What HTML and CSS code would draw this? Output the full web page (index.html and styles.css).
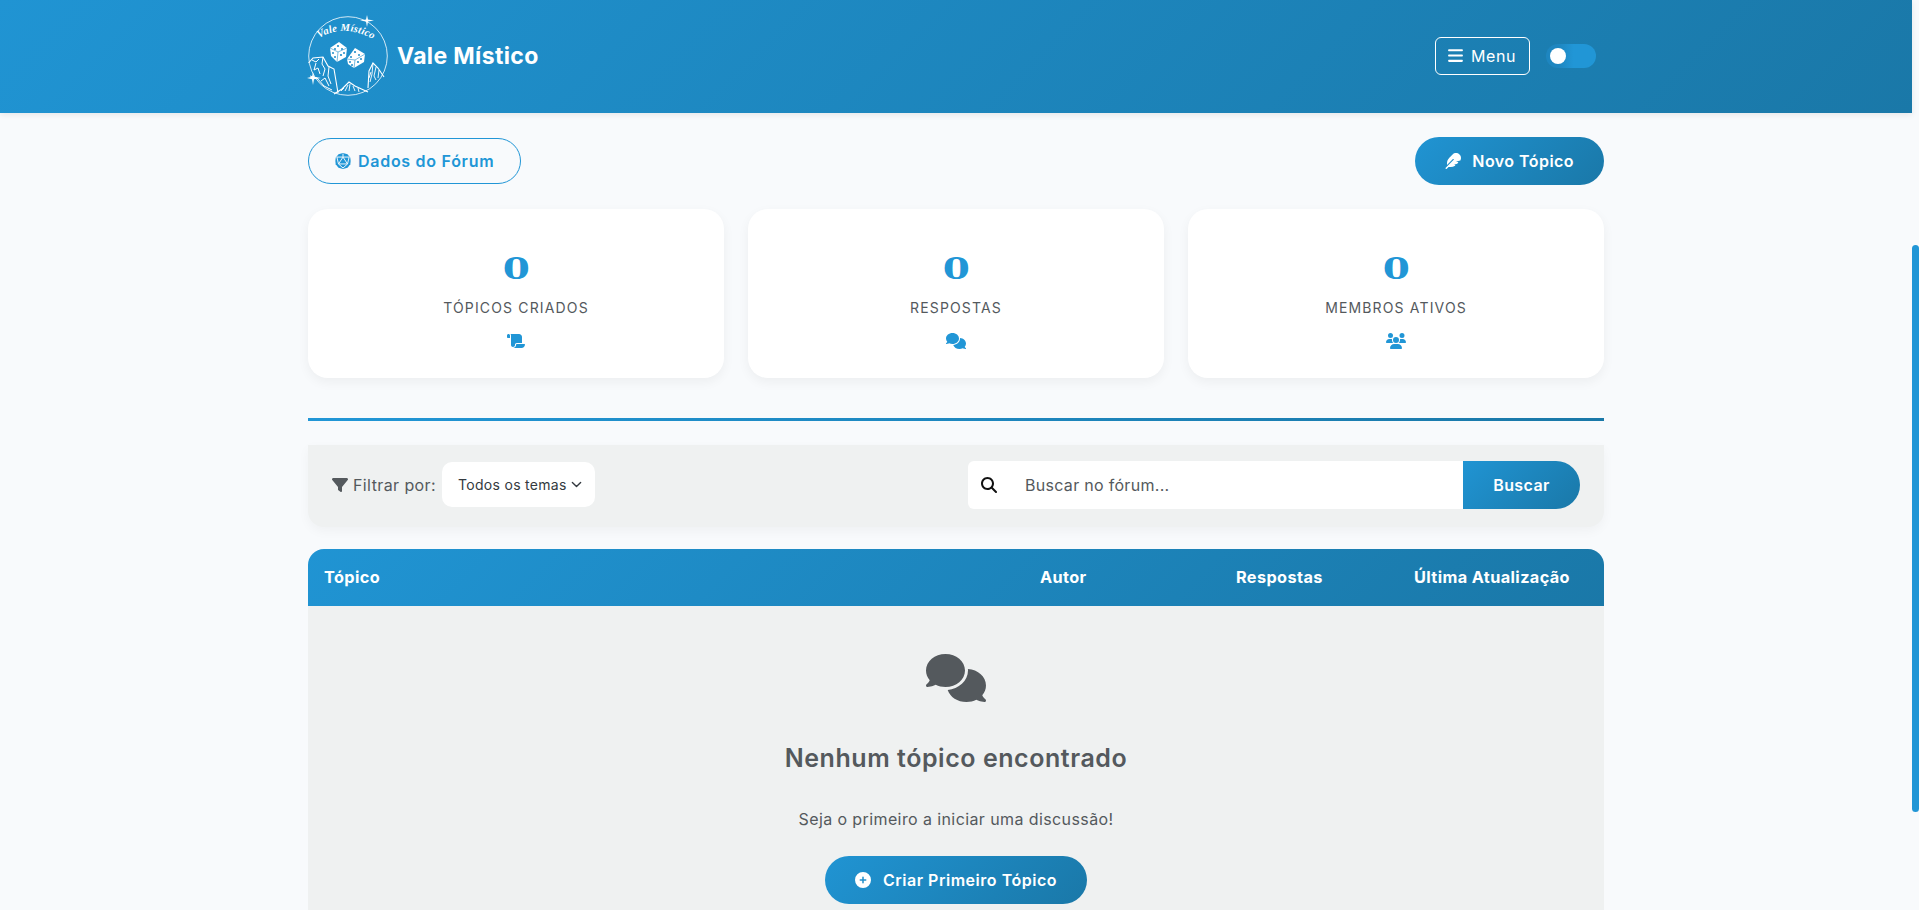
FILE: index.html
```html
<!DOCTYPE html>
<html lang="pt-BR">
<head>
<meta charset="utf-8">
<title>Vale Místico</title>
<link rel="stylesheet" href="styles.css">
</head>
<body>
<div class="page">
  <div class="viewport">
    <header class="topbar">
      <div class="container topbar-inner">
        <a class="brand">
          <svg class="logo" viewBox="0 0 80 80" fill="none" stroke="#fff" stroke-width="1">
            <circle cx="40" cy="40" r="39.3" stroke-width=".8"/>
            <path id="logoarc" d="M11 22 Q38 6 70 26" stroke="none"/>
            <text class="logo-text" fill="#fff" stroke="none"><textPath href="#logoarc">Vale Místico</textPath></text>
            <path d="M59 -1 L60 3.4 L66 4.5 L60 5.6 L59 11 L58 5.6 L52 4.5 L58 3.4Z" fill="#fff" stroke="none"/>
            <path d="M5 56 L6 60.8 L13 62 L6 63.2 L5 69 L4 63.2 L-1 62 L4 60.8Z" fill="#fff" stroke="none"/>
            <g fill="#fff" stroke="none">
              <path d="M22 32 L31 26 L39 32 L38 41 L29 46 L23 40Z"/>
              <path d="M39 43 L47 32 L57 38 L56 46 L46 52 L40 48Z"/>
            </g>
            <g stroke="#1f8dc9" stroke-width=".6">
              <path d="M22 32 L30 36 L39 32 M30 36 L29 46"/>
              <path d="M39 43 L47 44 L57 38 M47 44 L46 52"/>
            </g>
            <g fill="#1f8dc9" stroke="none">
              <circle cx="30" cy="30" r="1.1"/><circle cx="34" cy="33" r="1"/><circle cx="27" cy="33" r="1"/><circle cx="25" cy="37" r="1"/><circle cx="27" cy="41" r="1"/><circle cx="33" cy="39" r="1.1"/><circle cx="36" cy="37" r="1"/>
              <circle cx="47" cy="36" r="1.1"/><circle cx="51" cy="39" r="1"/><circle cx="43" cy="41" r="1"/><circle cx="42" cy="46" r="1"/><circle cx="44" cy="49" r="1"/><circle cx="50" cy="46" r="1.1"/><circle cx="53" cy="43" r="1"/>
            </g>
            <path stroke-width="1.1" d="M0.5 47 L5 42 L15 41 L20 50 L26 53 L30 77"/>
            <path stroke-width="1" d="M4 44 L8 46 L11 43 M15 41 L14 48 L17 53 L15 60 M8 47 L6 54 L10 52 L12 58 M21 51 L20 60 L23 68 M2 60 L9 62 L16 70 L24 74 M13 65 L17 62 L21 70"/>
            <path stroke-width="1.2" d="M26 78 L34 73 L41 66 L47 70 L60 76"/>
            <path stroke-width=".9" d="M37 75 L40 69 M42 68 L41 75 M45 70 L47 75 M50 72 L51 76 M33 75 L36 72"/>
            <path stroke-width="1.1" d="M60 72 L61 55 L65 47 L70 52 L76 61"/>
            <path stroke-width=".9" d="M65 47 L64 58 L62 66 M68 51 L66 60 L68 64 M71 54 L70 62 M63 56 L61 62"/>
          </svg>
          <span class="brand-name">Vale Místico</span>
        </a>
        <div class="topbar-actions">
          <button class="menu-btn">
            <svg class="ico-bars" viewBox="0 0 448 512"><path d="M0 96C0 78.3 14.3 64 32 64H416c17.7 0 32 14.3 32 32s-14.3 32-32 32H32C14.3 128 0 113.7 0 96zM0 256c0-17.7 14.3-32 32-32H416c17.7 0 32 14.3 32 32s-14.3 32-32 32H32c-17.7 0-32-14.3-32-32zM448 416c0 17.7-14.3 32-32 32H32c-17.7 0-32-14.3-32-32s14.3-32 32-32H416c17.7 0 32 14.3 32 32z"/></svg>
            <span>Menu</span>
          </button>
          <div class="toggle"><span class="toggle-knob"></span></div>
        </div>
      </div>
    </header>

    <main class="container content">
      <div class="actions">
        <button class="btn-outline">
          <svg class="ico-16" viewBox="0 0 512 512">
            <path d="M256 0 L400 40 L490 150 Q512 256 490 362 L400 472 L256 512 L112 472 L22 362 Q0 256 22 150 L112 40Z" fill="#2196d6"/>
            <path d="M256 130 L400 350 H112Z M256 130 L256 20 M256 130 L60 130 M256 130 L452 130 M112 350 L60 130 M400 350 L452 130 M112 350 L256 480 L400 350" fill="none" stroke="#f8fafc" stroke-width="30"/>
          </svg>
          <span>Dados do Fórum</span>
        </button>
        <button class="btn-primary btn-new">
          <svg class="ico-16" viewBox="0 0 512 512"><path d="M278.5 215.6L23 471c-9.4 9.4-9.4 24.6 0 33.9s24.6 9.4 33.9 0l57-57h68c49.7 0 97.9-14.4 139-41c11.1-7.2 5.5-23-7.8-23c-5.1 0-9.2-4.1-9.2-9.2c0-4.1 2.7-7.6 6.5-8.8l81-24.3c2.5-.8 4.8-2.1 6.7-4l22.4-22.4c10.1-10.1 2.9-27.3-11.3-27.3l-32.2 0c-5.1 0-9.2-4.1-9.2-9.2c0-4.1 2.7-7.6 6.5-8.8l112-33.6c4-1.2 7.4-3.9 9.3-7.7C506.4 207.6 512 184.1 512 160c0-41-16.3-80.3-45.3-109.3l-5.5-5.5C432.3 16.3 393 0 352 0s-80.3 16.3-109.3 45.3L139 149C91 197 64 262.1 64 330v55.3L253.6 195.8c6.2-6.2 16.4-6.2 22.6 0c5.4 5.4 6.1 13.6 2.2 19.8z"/></svg>
          <span>Novo Tópico</span>
        </button>
      </div>

      <section class="stats">
        <article class="stat">
          <div class="stat-num">0</div>
          <div class="stat-label">Tópicos Criados</div>
          <svg class="stat-ico" viewBox="0 0 576 512"><path d="M0 80v48c0 17.7 14.3 32 32 32H48 96V80c0-26.5-21.5-48-48-48S0 53.5 0 80zM112 32c10 13.4 16 30 16 48V384c0 35.3 28.7 64 64 64s64-28.7 64-64v-5.3c0-32.4 26.3-58.7 58.7-58.7H480V128c0-53-43-96-96-96H112zM464 480c61.9 0 112-50.1 112-112c0-8.8-7.2-16-16-16H314.7c-14.7 0-26.7 11.9-26.7 26.7V384c0 53-43 96-96 96H368h96z"/></svg>
        </article>
        <article class="stat">
          <div class="stat-num">0</div>
          <div class="stat-label">Respostas</div>
          <svg class="stat-ico" viewBox="0 0 640 512"><path d="M208 352c114.9 0 208-78.8 208-176S322.9 0 208 0S0 78.8 0 176c0 38.6 14.7 74.3 39.6 103.4c-3.5 9.4-8.7 17.7-14.2 24.7c-4.8 6.2-9.7 11-13.3 14.3c-1.8 1.6-3.3 2.9-4.3 3.7c-.5 .4-.9 .7-1.1 .8l-.2 .2 0 0 0 0C1 327.2-1.4 334.4 .8 340.9S9.1 352 16 352c21.8 0 43.8-5.6 62.1-12.5c9.2-3.5 17.8-7.4 25.3-11.4C134.1 343.3 169.8 352 208 352zM448 176c0 112.3-99.1 196.9-216.5 207C255.8 457.4 336.4 512 432 512c38.2 0 73.9-8.7 104.7-23.9c7.5 4 16 7.9 25.2 11.4c18.3 6.9 40.3 12.5 62.1 12.5c6.9 0 13.1-4.5 15.2-11.1c2.1-6.6-.2-13.8-5.8-17.9l0 0 0 0-.2-.2c-.2-.2-.6-.4-1.1-.8c-1-.8-2.5-2-4.3-3.7c-3.6-3.3-8.5-8.1-13.3-14.3c-5.5-7-10.7-15.4-14.2-24.7c24.9-29 39.6-64.7 39.6-103.4c0-92.8-84.9-168.9-192.6-175.5c.4 5.1 .6 10.3 .6 15.5z"/></svg>
        </article>
        <article class="stat">
          <div class="stat-num">0</div>
          <div class="stat-label">Membros Ativos</div>
          <svg class="stat-ico" viewBox="0 0 640 512"><path d="M144 0a80 80 0 1 1 0 160A80 80 0 1 1 144 0zM512 0a80 80 0 1 1 0 160A80 80 0 1 1 512 0zM0 298.7C0 239.8 47.8 192 106.7 192h42.7c15.9 0 31 3.5 44.6 9.7c-1.3 7.2-1.9 14.7-1.9 22.3c0 38.2 16.8 72.5 43.3 96c-.2 0-.4 0-.7 0H21.3C9.6 320 0 310.4 0 298.7zM405.3 320c-.2 0-.4 0-.7 0c26.6-23.5 43.3-57.8 43.3-96c0-7.6-.7-15-1.9-22.3c13.6-6.3 28.7-9.7 44.6-9.7h42.7C592.2 192 640 239.8 640 298.7c0 11.8-9.6 21.3-21.3 21.3H405.3zM224 224a96 96 0 1 1 192 0 96 96 0 1 1 -192 0zM128 485.3C128 411.7 187.7 352 261.3 352H378.7C452.3 352 512 411.7 512 485.3c0 14.7-11.9 26.7-26.7 26.7H154.7c-14.7 0-26.7-11.9-26.7-26.7z"/></svg>
        </article>
      </section>

      <hr class="divider">

      <section class="filters">
        <div class="filter-left">
          <svg class="ico-filter" viewBox="0 0 512 512"><path d="M3.9 54.9C10.5 40.9 24.5 32 40 32H472c15.5 0 29.5 8.9 36.1 22.9s4.6 30.5-5.2 42.5L320 320.9V448c0 12.1-6.8 23.2-17.7 28.6s-23.8 4.3-33.5-3l-64-48c-8.1-6-12.8-15.5-12.8-25.6V320.9L9 97.3C-.7 85.4-2.8 68.8 3.9 54.9z"/></svg>
          <span class="filter-label">Filtrar por:</span>
          <div class="select">
            <span>Todos os temas</span>
            <svg class="chev" viewBox="0 0 16 16"><path d="M2 5l6 6 6-6" fill="none" stroke="#343a40" stroke-width="2" stroke-linecap="round" stroke-linejoin="round"/></svg>
          </div>
        </div>
        <form class="search">
          <span class="search-ico"><svg class="ico-16" viewBox="0 0 512 512"><path d="M416 208c0 45.9-14.9 88.3-40 122.7L502.6 457.4c12.5 12.5 12.5 32.8 0 45.3s-32.8 12.5-45.3 0L330.7 376c-34.4 25.2-76.8 40-122.7 40C93.1 416 0 322.9 0 208S93.1 0 208 0S416 93.1 416 208zM208 352a144 144 0 1 0 0-288 144 144 0 1 0 0 288z"/></svg></span>
          <input class="search-input" type="text" placeholder="Buscar no fórum...">
          <button class="search-btn" type="button">Buscar</button>
        </form>
      </section>

      <section class="topics">
        <div class="topics-head">
          <div class="th">Tópico</div>
          <div class="th">Autor</div>
          <div class="th">Respostas</div>
          <div class="th">Última Atualização</div>
        </div>
        <div class="empty">
          <svg class="empty-ico" viewBox="0 0 640 512"><path d="M208 352c114.9 0 208-78.8 208-176S322.9 0 208 0S0 78.8 0 176c0 38.6 14.7 74.3 39.6 103.4c-3.5 9.4-8.7 17.7-14.2 24.7c-4.8 6.2-9.7 11-13.3 14.3c-1.8 1.6-3.3 2.9-4.3 3.7c-.5 .4-.9 .7-1.1 .8l-.2 .2 0 0 0 0C1 327.2-1.4 334.4 .8 340.9S9.1 352 16 352c21.8 0 43.8-5.6 62.1-12.5c9.2-3.5 17.8-7.4 25.3-11.4C134.1 343.3 169.8 352 208 352zM448 176c0 112.3-99.1 196.9-216.5 207C255.8 457.4 336.4 512 432 512c38.2 0 73.9-8.7 104.7-23.9c7.5 4 16 7.9 25.2 11.4c18.3 6.9 40.3 12.5 62.1 12.5c6.9 0 13.1-4.5 15.2-11.1c2.1-6.6-.2-13.8-5.8-17.9l0 0 0 0-.2-.2c-.2-.2-.6-.4-1.1-.8c-1-.8-2.5-2-4.3-3.7c-3.6-3.3-8.5-8.1-13.3-14.3c-5.5-7-10.7-15.4-14.2-24.7c24.9-29 39.6-64.7 39.6-103.4c0-92.8-84.9-168.9-192.6-175.5c.4 5.1 .6 10.3 .6 15.5z"/></svg>
          <h2 class="empty-title">Nenhum tópico encontrado</h2>
          <p class="empty-text">Seja o primeiro a iniciar uma discussão!</p>
          <button class="btn-primary btn-first">
            <svg class="ico-16" viewBox="0 0 512 512"><path d="M256 512A256 256 0 1 0 256 0a256 256 0 1 0 0 512zM232 344V280H168c-13.3 0-24-10.7-24-24s10.7-24 24-24h64V168c0-13.3 10.7-24 24-24s24 10.7 24 24v64h64c13.3 0 24 10.7 24 24s-10.7 24-24 24H280v64c0 13.3-10.7 24-24 24s-24-10.7-24-24z"/></svg>
            <span>Criar Primeiro Tópico</span>
          </button>
        </div>
      </section>
    </main>
  </div>
  <div class="scrollbar"><div class="scroll-thumb"></div></div>
</div>
</body>
</html>
```

FILE: styles.css
```css
* { box-sizing: border-box; }
html, body { margin: 0; height: 100%; overflow: hidden; }
body {
  font-family: Inter, "Open Sans", "Liberation Sans", sans-serif;
  font-size: 16px;
  color: #54595d;
  background: #f8fafc;
}
button { font-family: inherit; cursor: pointer; }

.page { display: flex; height: 910px; overflow: hidden; }
.viewport { width: 1912px; flex: none; }
.scrollbar { width: 7px; flex: none; padding-top: 245px; }
.scroll-thumb { height: 567px; background: #2196d6; border-radius: 4px; }

.container { width: 1320px; margin: 0 auto; padding: 0 12px; }

.topbar {
  height: 113px;
  background: linear-gradient(135deg, #2094d3, #1a78a8);
  box-shadow: 0 2px 6px rgba(0, 0, 0, .08);
}
.topbar-inner { display: flex; align-items: center; justify-content: space-between; height: 111px; padding-right: 20px; }
.brand { display: flex; align-items: center; gap: 9px; color: #fff; }
.logo { width: 80px; height: 80px; display: block; overflow: visible; }
.logo-text { font: italic 700 10.5px "Liberation Serif", serif; letter-spacing: .3px; }
.brand-name { font-size: 23px; font-weight: 700; letter-spacing: .35px; }
.topbar-actions { display: flex; align-items: center; gap: 16px; }

.menu-btn {
  display: flex; align-items: center; gap: 8px;
  width: 95px; height: 38px;
  padding: 0 12px;
  background: transparent; color: #fff;
  border: 1px solid #fff; border-radius: 6px;
  font-size: 16px; font-weight: 400; letter-spacing: .6px;
}
.ico-bars { width: 15px; height: 17px; fill: #fff; flex: none; }

.toggle {
  width: 50px; height: 24px;
  padding: 4px;
  border-radius: 12px;
  background: linear-gradient(90deg, #1e86c0 0, #1e86c0 25%, #2196d6 55%);
}
.toggle-knob { display: block; width: 16px; height: 16px; border-radius: 50%; background: #fff; }

.content { padding-top: 24px; }

.actions { display: flex; justify-content: space-between; align-items: center; }
.ico-16 { width: 16px; height: 16px; display: block; flex: none; fill: currentColor; }

.btn-outline {
  display: flex; align-items: center; gap: 7px;
  height: 46px; padding: 0 26px;
  background: transparent;
  color: #2196d6;
  border: 1px solid #2196d6; border-radius: 23px;
  font-size: 16px; font-weight: 600; letter-spacing: .72px;
}
.btn-primary {
  display: flex; align-items: center; gap: 12px;
  height: 48px; padding: 0 30px;
  border: 0; border-radius: 24px;
  background: linear-gradient(135deg, #2094d3, #1a78a8);
  color: #fff;
  font-size: 16px; font-weight: 600; letter-spacing: .45px;
}
.btn-new { gap: 11px; }
.btn-first { letter-spacing: .52px; }

.stats { display: grid; grid-template-columns: repeat(3, 1fr); gap: 24px; margin-top: 24px; }
.stat {
  display: flex; flex-direction: column; align-items: center;
  height: 169px; padding-top: 41px;
  background: #fff; border-radius: 20px;
  box-shadow: 0 4px 12px rgba(0, 0, 0, .05);
}
.stat-num {
  font-family: "DejaVu Serif", "Liberation Serif", serif;
  font-weight: 700; font-size: 30px; line-height: 38px;
  color: #2196d6;
  transform: scaleX(1.3);
}
.stat-label {
  margin-top: 10px;
  font-size: 14px; line-height: 20px;
  text-transform: uppercase; letter-spacing: 1.15px;
  color: #54595d;
}
.stat-ico { width: 20px; height: 16px; margin-top: 15px; fill: #2196d6; }

.divider { margin: 40px 0 24px; height: 3px; border: 0; background: linear-gradient(90deg, #2196d6, #1a78a8); }

.filters {
  display: flex; align-items: flex-start; justify-content: space-between;
  padding: 16px 24px 18px;
  background: #eff1f1; border-radius: 0 0 16px 16px;
  box-shadow: 0 4px 12px rgba(0, 0, 0, .04);
}
.filter-left { display: flex; align-items: center; height: 47px; }
.ico-filter { width: 16px; height: 16px; fill: #54595d; margin-right: 5px; }
.filter-label { margin-right: 6px; letter-spacing: .4px; font-size: 16px; }
.select {
  display: flex; align-items: center; gap: 4px;
  height: 45px; width: 153px;
  padding: 0 0 0 16px;
  background: #fff; border-radius: 10px;
  color: #343a40; font-size: 14px; letter-spacing: .3px;
}
.chev { width: 11px; height: 11px; }

.search { display: flex; width: 612px; height: 48px; }
.search-ico {
  display: flex; align-items: center;
  width: 57px; padding-left: 13px;
  background: #fff; color: #111;
  border-radius: 6px 0 0 6px;
}
.search-input {
  flex: 1; min-width: 0;
  border: 0; outline: 0; padding: 0;
  background: #fff;
  font: 400 16px Inter, "Open Sans", sans-serif; letter-spacing: .3px;
  color: #54595d;
}
.search-input::placeholder { color: #54595d; opacity: 1; }
.search-btn {
  width: 117px; border: 0;
  border-radius: 0 24px 24px 0;
  background: linear-gradient(135deg, #2094d3, #1a78a8);
  color: #fff; font-size: 16px; font-weight: 600; letter-spacing: .4px;
}

.topics { margin-top: 22px; }
.topics-head {
  display: grid; grid-template-columns: 716px 196px 178px 1fr;
  height: 57px;
  background: linear-gradient(135deg, #2094d3, #1a78a8);
  border-radius: 16px 16px 0 0;
  color: #fff; font-weight: 700;
  font-size: 16.3px;
}
.th { padding: 0 16px; line-height: 57px; letter-spacing: .38px; white-space: nowrap; }

.empty {
  display: flex; flex-direction: column; align-items: center;
  height: 400px; padding-top: 48px;
  background: #eff1f1;
}
.empty-ico { width: 60px; height: 48px; fill: #54595d; }
.empty-title {
  margin: 40px 0 0;
  font-size: 25px; line-height: 32px; font-weight: 600;
  letter-spacing: .55px; color: #54595d;
}
.empty-text { margin: 33px 0 0; line-height: 24px; letter-spacing: .4px; }
.btn-first { margin-top: 25px; }
```
